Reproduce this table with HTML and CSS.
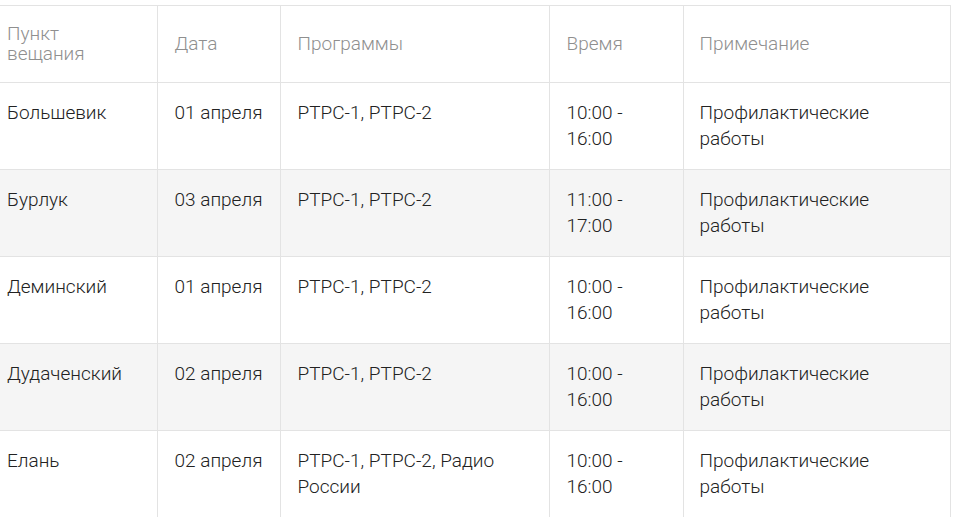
FILE: index.html
```html
<!DOCTYPE html>
<html lang="ru">
<head>
<meta charset="utf-8">
<link rel="stylesheet" href="styles.css">
</head>
<body>
<table class="schedule">
  <colgroup>
    <col class="c1"><col class="c2"><col class="c3"><col class="c4"><col class="c5">
  </colgroup>
  <thead>
    <tr>
      <th>Пункт<br>вещания</th>
      <th>Дата</th>
      <th>Программы</th>
      <th>Время</th>
      <th>Примечание</th>
    </tr>
  </thead>
  <tbody>
    <tr>
      <td>Большевик</td><td>01 апреля</td><td>РТРС-1, РТРС-2</td><td>10:00 -<br>16:00</td><td>Профилактические<br>работы</td>
    </tr>
    <tr class="alt">
      <td>Бурлук</td><td>03 апреля</td><td>РТРС-1, РТРС-2</td><td>11:00 -<br>17:00</td><td>Профилактические<br>работы</td>
    </tr>
    <tr>
      <td>Деминский</td><td>01 апреля</td><td>РТРС-1, РТРС-2</td><td>10:00 -<br>16:00</td><td>Профилактические<br>работы</td>
    </tr>
    <tr class="alt">
      <td>Дудаченский</td><td>02 апреля</td><td>РТРС-1, РТРС-2</td><td>10:00 -<br>16:00</td><td>Профилактические<br>работы</td>
    </tr>
    <tr>
      <td>Елань</td><td>02 апреля</td><td>РТРС-1, РТРС-2, Радио<br>России</td><td>10:00 -<br>16:00</td><td>Профилактические<br>работы</td>
    </tr>
  </tbody>
</table>
</body>
</html>
```
FILE: styles.css
```css
html, body {
  margin: 0;
  padding: 0;
  background: #fff;
}
body {
  padding-top: 5px;
  font-family: Roboto, "Liberation Sans", sans-serif;
}
.schedule {
  border-collapse: collapse;
  table-layout: fixed;
  width: 950px;
}
.c1 { width: 157px; }
.c2 { width: 123px; }
.c3 { width: 269px; }
.c4 { width: 134px; }
.c5 { width: 267px; }
.schedule th,
.schedule td {
  border: 1px solid #e3e3e3;
  text-align: left;
  vertical-align: top;
  padding: 17px 16px 17px 17px;
}
.schedule th:first-child,
.schedule td:first-child {
  border-left: none;
  padding-left: 7px;
}
.schedule th:last-child,
.schedule td:last-child {
  padding-left: 16px;
}
.schedule th {
  font-weight: 300;
  font-size: 19px;
  line-height: 20px;
  color: #8f8f8f;
  vertical-align: middle;
  height: 40px;
  padding-top: 18px;
  padding-bottom: 18px;
}
.schedule td {
  font-weight: 300;
  font-size: 19px;
  line-height: 26px;
  color: #222;
  height: 52px;
}
.schedule tr.alt td {
  background: #f5f5f5;
}
```
